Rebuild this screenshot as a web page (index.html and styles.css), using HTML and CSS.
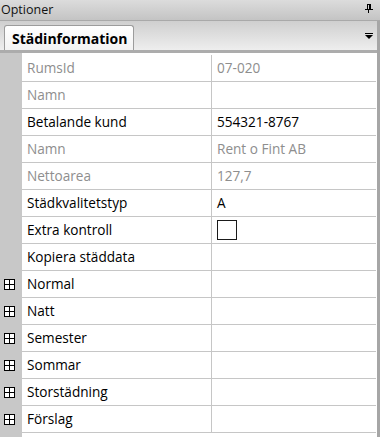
FILE: index.html
```html
<!DOCTYPE html>
<html lang="sv">
<head>
    <meta charset="UTF-8">
    <meta name="viewport" content="width=device-width, initial-scale=1.0">
    <title>Optioner</title>
    <link rel="stylesheet" href="styles.css">
</head>
<body>
    <div class="panel">
        <div class="titlebar">
            <span class="title">Optioner</span>
            <svg class="pin" width="8" height="9" viewBox="0 0 8 9">
                <rect x="2.5" y="0.5" width="3" height="5" fill="none" stroke="#000"/>
                <rect x="4" y="1" width="1" height="4" fill="#000"/>
                <rect x="0" y="5" width="8" height="1" fill="#000"/>
                <rect x="3" y="6" width="1" height="3" fill="#000"/>
            </svg>
        </div>

        <div class="panel-body">
            <div class="tabstrip">
                <div class="tab">Städinformation</div>
                <svg class="tab-menu" width="8" height="7" viewBox="0 0 8 7">
                    <rect x="0" y="0" width="8" height="1" fill="#000"/>
                    <polygon points="0,2 8,2 4,6" fill="#000"/>
                </svg>
            </div>

            <div class="grid">
                <div class="row"><div class="margin"></div><div class="label dim">RumsId</div><div class="value dim">07-020</div></div>
                <div class="row"><div class="margin"></div><div class="label dim">Namn</div><div class="value"></div></div>
                <div class="row"><div class="margin"></div><div class="label">Betalande kund</div><div class="value">554321-8767</div></div>
                <div class="row"><div class="margin"></div><div class="label dim">Namn</div><div class="value dim">Rent o Fint AB</div></div>
                <div class="row"><div class="margin"></div><div class="label dim">Nettoarea</div><div class="value dim">127,7</div></div>
                <div class="row"><div class="margin"></div><div class="label">Städkvalitetstyp</div><div class="value">A</div></div>
                <div class="row"><div class="margin"></div><div class="label">Extra kontroll</div><div class="value"><span class="checkbox"></span></div></div>
                <div class="row"><div class="margin"></div><div class="label">Kopiera städdata</div><div class="value"></div></div>
                <div class="row"><div class="margin"><span class="expander"></span></div><div class="label">Normal</div><div class="value"></div></div>
                <div class="row"><div class="margin"><span class="expander"></span></div><div class="label">Natt</div><div class="value"></div></div>
                <div class="row"><div class="margin"><span class="expander"></span></div><div class="label">Semester</div><div class="value"></div></div>
                <div class="row"><div class="margin"><span class="expander"></span></div><div class="label">Sommar</div><div class="value"></div></div>
                <div class="row"><div class="margin"><span class="expander"></span></div><div class="label">Storstädning</div><div class="value"></div></div>
                <div class="row"><div class="margin"><span class="expander"></span></div><div class="label">Förslag</div><div class="value"></div></div>
            </div>
        </div>
    </div>
</body>
</html>
```

FILE: styles.css
```css
body {
    margin: 0;
    background: #fff;
    font-family: 'Open Sans', 'Noto Sans', sans-serif;
    color: #000;
}

.panel {
    width: 380px;
    height: 437px;
    overflow: hidden;
    display: flex;
    flex-direction: column;
}

/* Title bar */
.titlebar {
    height: 20px;
    border-bottom: 1px solid #a9a9a9;
    background: linear-gradient(to bottom, #dcdcdc, #c4c4c4);
    display: flex;
    align-items: center;
    justify-content: space-between;
    padding: 0 7px 0 1px;
    flex-shrink: 0;
}

.title {
    font-size: 12.5px;
    line-height: 20px;
    color: #111;
}

.pin {
    display: block;
    margin-top: -3px;
}

/* Body with tab strip and property grid */
.panel-body {
    flex: 1;
    display: flex;
    flex-direction: column;
    border-right: 3px solid #a6a6a6;
}

.tabstrip {
    height: 29px;
    border-bottom: 3px solid #acacac;
    background: linear-gradient(to bottom, #cfcfcf, #eeeeee);
    display: flex;
    align-items: flex-end;
    justify-content: space-between;
    padding: 0 4px 0 4px;
    flex-shrink: 0;
}

.tab {
    height: 25px;
    width: 130px;
    border: 1px solid #9c9c9c;
    border-bottom: none;
    border-radius: 3px 3px 0 0;
    background: linear-gradient(to bottom, #ffffff, #f3f3f3);
    font-weight: bold;
    font-size: 14px;
    line-height: 26px;
    padding-left: 7px;
    box-sizing: border-box;
}

.tab-menu {
    display: block;
    margin-bottom: 10px;
}

.grid {
    flex: 1;
    padding-top: 2px;
    background: linear-gradient(to right, #c8c8c8 22px, #fff 22px);
}

.row {
    display: grid;
    grid-template-columns: 22px 190px 1fr;
    height: 27px;
}

.margin {
    background: #c8c8c8;
    display: flex;
    align-items: center;
    padding-left: 4px;
}

.label, .value {
    border-bottom: 1px solid #c6c6c6;
    font-size: 13.6px;
    line-height: 26px;
    padding-left: 5px;
    white-space: nowrap;
}

.label {
    border-right: 1px solid #c6c6c6;
}

.value {
    margin-right: 1px;
    display: flex;
    align-items: center;
}

.dim {
    color: #8e8e8e;
}

.checkbox {
    display: block;
    width: 18px;
    height: 18px;
    border: 1px solid #1a1a1a;
    background: #fff;
}

.expander {
    display: block;
    position: relative;
    width: 9px;
    height: 9px;
    border: 1px solid #000;
    background: #fff;
}

.expander::before,
.expander::after {
    content: "";
    position: absolute;
    background: #000;
}

.expander::before {
    left: 0;
    top: 4px;
    width: 9px;
    height: 1px;
}

.expander::after {
    left: 4px;
    top: 0;
    width: 1px;
    height: 9px;
}
```
